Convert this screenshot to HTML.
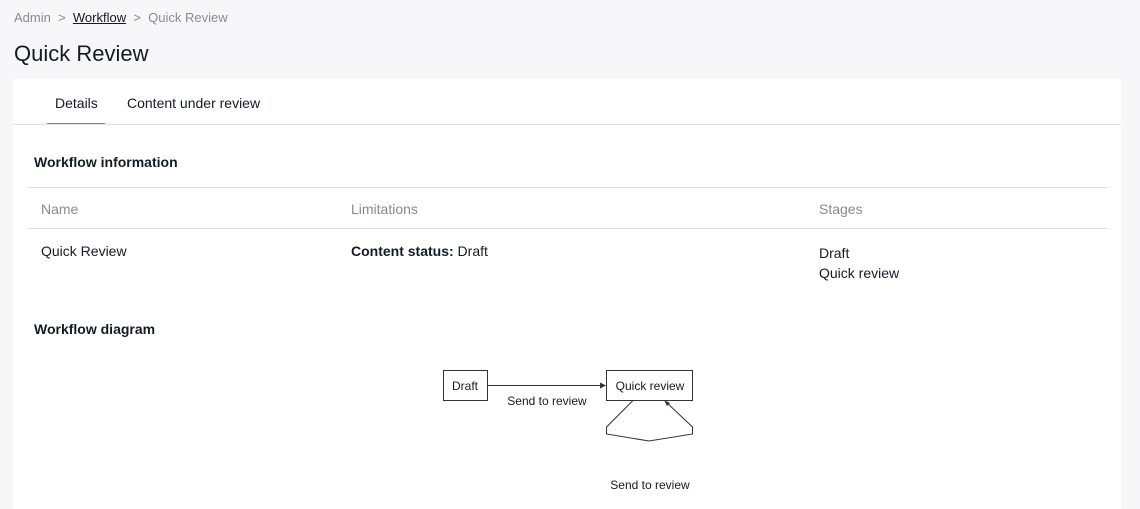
<!DOCTYPE html>
<html><head><meta charset="utf-8"><style>
*{margin:0;padding:0;box-sizing:border-box}
body{width:1140px;height:505px;background:#f7f7f9;font-family:"Liberation Sans",sans-serif;color:#131c26;position:relative;overflow:hidden}
.a{position:absolute;white-space:nowrap}
.card{position:absolute;left:13px;top:79px;width:1108px;height:430px;background:#fff}
</style></head><body>
<div class="a" style="left:14px;top:10px;font-size:13px;color:#878b90">Admin &nbsp;&gt;&nbsp; <span style="color:#131c26;text-decoration:underline">Workflow</span> &nbsp;&gt;&nbsp; Quick Review</div>
<div class="a" style="left:14px;top:41px;font-size:22px">Quick Review</div>
<div class="card">
 <div class="a" style="left:42px;top:16px;font-size:14px">Details</div>
 <div class="a" style="left:114px;top:16px;font-size:14px">Content under review</div>
 <div class="a" style="left:34px;top:44px;width:58px;height:2px;background:#db5d7a"></div>
 <div class="a" style="left:0;top:45px;width:1108px;height:1px;background:#e3e4e8"></div>
 <div class="a" style="left:21px;top:75px;font-size:14px;font-weight:bold">Workflow information</div>
 <div class="a" style="left:14px;top:108px;width:1081px;height:1px;background:#e3e4e8"></div>
 <div class="a" style="left:28px;top:122px;font-size:14px;color:#878b90">Name</div>
 <div class="a" style="left:338px;top:122px;font-size:14px;color:#878b90">Limitations</div>
 <div class="a" style="left:806px;top:122px;font-size:14px;color:#878b90">Stages</div>
 <div class="a" style="left:14px;top:149px;width:1081px;height:1px;background:#e3e4e8"></div>
 <div class="a" style="left:28px;top:164px;font-size:14px">Quick Review</div>
 <div class="a" style="left:338px;top:164px;font-size:14px"><b>Content status:</b> Draft</div>
 <div class="a" style="left:806px;top:164px;font-size:14px;line-height:20px">Draft<br>Quick review</div>
 <div class="a" style="left:21px;top:242px;font-size:14px;font-weight:bold">Workflow diagram</div>
</div>
<svg class="a" style="left:0;top:0" width="1140" height="505" font-family="Liberation Sans, sans-serif" font-size="12" fill="#131c26">
 <rect x="443.5" y="370.5" width="44" height="30" fill="#fff" stroke="#333"/>
 <text x="465" y="390" text-anchor="middle">Draft</text>
 <rect x="606.5" y="370.5" width="86" height="30" fill="#fff" stroke="#333"/>
 <text x="650" y="390" text-anchor="middle">Quick review</text>
 <line x1="487" y1="385.5" x2="602" y2="385.5" stroke="#333"/>
 <path d="M600 382.5 L606 385.5 L600 388.5Z" fill="#333"/>
 <text x="547" y="405" text-anchor="middle">Send to review</text>
 <path d="M633 400.5 L606.5 427 L606.5 434 L649 441 L692.5 434 L692.5 427 L666 402" fill="none" stroke="#333"/>
 <path d="M664 400 L667 406 L670 403Z" fill="#333"/>
 <text x="650" y="489" text-anchor="middle">Send to review</text>
</svg>
</body></html>
